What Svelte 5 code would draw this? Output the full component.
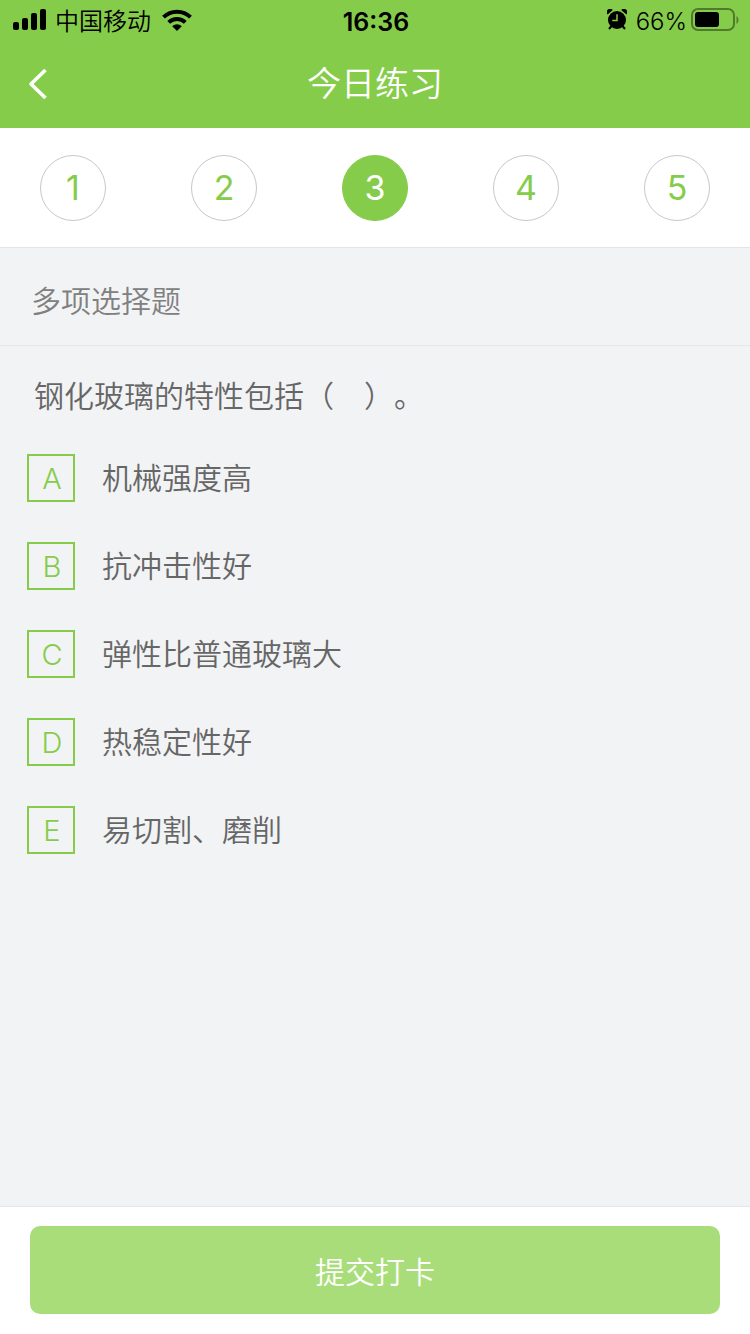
<script>
	const options = [
		{ key: 'A', text: '机械强度高' },
		{ key: 'B', text: '抗冲击性好' },
		{ key: 'C', text: '弹性比普通玻璃大' },
		{ key: 'D', text: '热稳定性好' },
		{ key: 'E', text: '易切割、磨削' }
	];

	let current = $state(3);
	let selected = $state([]);
</script>

<div class="page">
	<header>
		<div class="status">
			<div class="side">
				<svg class="signal" width="34" height="22" viewBox="0 0 34 22" aria-hidden="true">
					<rect x="0" y="13" width="6" height="8" rx="2" />
					<rect x="9" y="9" width="6" height="12" rx="2" />
					<rect x="18" y="4" width="6" height="17" rx="2" />
					<rect x="27" y="0" width="6" height="21" rx="2" />
				</svg>
				<span class="carrier">中国移动</span>
				<svg class="wifi" width="30" height="22" viewBox="0 0 30 22" aria-hidden="true">
					<g fill="none" stroke="#000" stroke-width="4">
						<path d="M1.5 8.2A19.2 19.2 0 0 1 28.5 8.2" />
						<path d="M6.7 13.4A11.8 11.8 0 0 1 23.3 13.4" />
					</g>
					<path d="M15 22l-4.8-4.8a6.8 6.8 0 0 1 9.6 0z" />
				</svg>
			</div>
			<span class="time">16:36</span>
			<div class="side right">
				<svg class="alarm" width="20" height="22" viewBox="0 0 20 22" aria-hidden="true">
					<circle cx="10" cy="11" r="9" />
					<path d="M.6 5.4A3.2 3.2 0 0 1 5.800 1zM19.400 5.400A3.200 3.200 0 0 0 14.200 1z" />
					<path d="M4.5 17l-2.500 3M15.500 17l2.500 3" stroke="#000" stroke-width="2" />
					<path d="M10 5.2V11.4H5.2" fill="none" stroke="#86cc4b" stroke-width="1.5" />
				</svg>
				<span class="percent">66%</span>
				<svg class="battery" width="48" height="24" viewBox="0 0 48 24" aria-hidden="true">
					<rect x="1" y="1" width="42" height="21" rx="6" fill="none" stroke="#000" stroke-opacity=".4" stroke-width="2" />
					<rect x="4" y="4" width="24" height="15" rx="3" />
					<path d="M45.5 8v8c2.6-1.6 2.6-6.400 0-8z" fill-opacity=".4" />
				</svg>
			</div>
		</div>
		<nav class="title-bar">
			<button class="back" aria-label="返回">
				<svg width="20" height="32" viewBox="0 0 20 32" aria-hidden="true">
					<path d="M17.5 2L3 16l14.5 14" fill="none" stroke="#fff" stroke-width="3.6" stroke-linejoin="round" />
				</svg>
			</button>
			<h1>今日练习</h1>
		</nav>
	</header>

	<div class="steps">
		{#each [1, 2, 3, 4, 5] as n}
			<button class="step" class:active={n === current} onclick={() => (current = n)}>{n}</button>
		{/each}
	</div>

	<main>
		<h2>多项选择题</h2>
		<fieldset>
			<legend>钢化玻璃的特性包括（　）。</legend>
			{#each options as option (option.key)}
				<label class="option">
					<input type="checkbox" value={option.key} bind:group={selected} />
					<span class="key">{option.key}</span>
					<span>{option.text}</span>
				</label>
			{/each}
		</fieldset>
	</main>

	<footer>
		<button class="submit">提交打卡</button>
	</footer>
</div>

<style>
	:global(body) {
		margin: 0;
	}

	.page {
		display: flex;
		flex-direction: column;
		min-height: 100vh;
		background: #f2f3f5;
		color: #666;
		font-family: Inter, 'Noto Sans CJK SC', sans-serif;
		font-size: 30px;
		font-weight: 350;
		text-spacing-trim: space-all;
	}

	button {
		margin: 0;
		padding: 0;
		border: 0;
		background: none;
		font: inherit;
		cursor: pointer;
	}

	svg {
		display: block;
		flex: none;
	}

	header {
		background: #86cc4b;
	}

	.status {
		display: flex;
		align-items: center;
		height: 40px;
		padding: 0 11px 0 13px;
		color: #000;
		font-size: 24px;
		line-height: 36px;
	}

	.status span {
		padding-top: 3px;
	}

	.side {
		display: flex;
		flex: 1 1 0;
		align-items: center;
	}

	.right {
		justify-content: flex-end;
	}

	.carrier {
		margin: 0 11px 0 8px;
	}

	.time {
		font-size: 25px;
		font-weight: 600;
	}

	.percent {
		margin: 0 4px 0 9px;
	}

	.title-bar {
		display: grid;
		grid-template-columns: 88px 1fr 88px;
		align-items: center;
		height: 88px;
	}

	.back {
		display: flex;
		align-items: center;
		height: 88px;
		padding-left: 28px;
	}

	h1 {
		margin: 0;
		color: #fff;
		font-size: 34px;
		font-weight: 350;
		line-height: 46px;
		text-align: center;
	}

	.steps {
		display: flex;
		align-items: center;
		justify-content: space-between;
		padding: 27px 40px 26px;
		border-bottom: 1px solid #e4e5e7;
		background: #fff;
	}

	.step {
		box-sizing: border-box;
		width: 66px;
		height: 66px;
		border: 1px solid #c8c8c8;
		border-radius: 50%;
		color: #86cc4b;
		font-size: 34px;
		font-weight: 400;
		line-height: 64px;
	}

	.active {
		border-color: #86cc4b;
		background: #86cc4b;
		color: #fff;
	}

	main {
		flex: 1;
	}

	h2 {
		margin: 0;
		padding: 31px 31px 22px;
		border-bottom: 1px solid #e6e7e9;
		color: #808080;
		font-size: 30px;
		font-weight: 350;
		line-height: 44px;
	}

	fieldset {
		margin: 0;
		padding: 28px 27px;
		border: 0;
	}

	legend {
		float: left;
		width: 100%;
		margin-bottom: 36px;
		padding: 0 7px;
		line-height: 44px;
	}

	.option {
		display: flex;
		clear: both;
		align-items: center;
		gap: 27px;
		margin-bottom: 40px;
		line-height: 44px;
		cursor: pointer;
	}

	.option input {
		position: absolute;
		opacity: 0;
	}

	.key {
		box-sizing: border-box;
		width: 48px;
		height: 48px;
		padding-left: 2px;
		border: 2px solid #86cc4b;
		color: #86cc4b;
		font-size: 29px;
		line-height: 46px;
		text-align: center;
	}

	.option input:checked + .key {
		background: #86cc4b;
		color: #fff;
	}

	footer {
		padding: 19px 30px 20px;
		border-top: 1px solid #e4e5e7;
		background: #fff;
	}

	.submit {
		width: 100%;
		height: 88px;
		border-radius: 10px;
		background: #a9dd7a;
		color: #fff;
	}
</style>
